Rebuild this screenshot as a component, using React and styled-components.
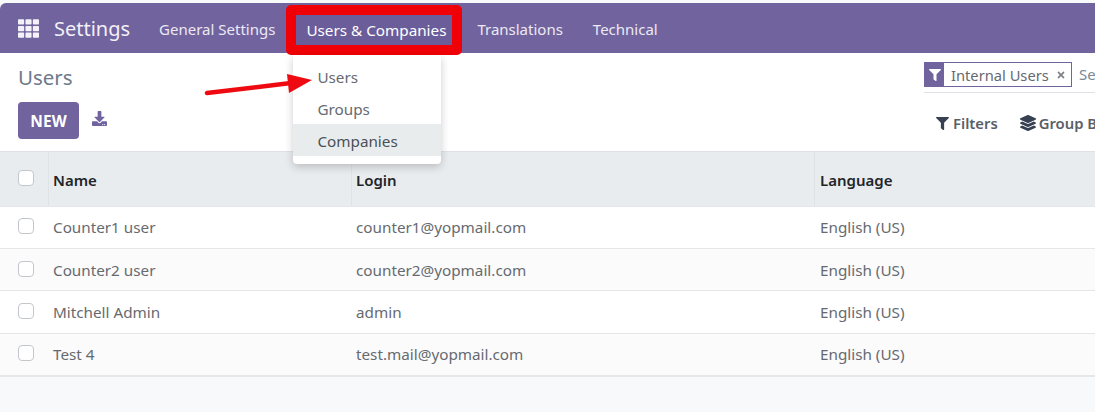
import React from 'react';
import styled, { createGlobalStyle } from 'styled-components';
import { FaFilter, FaLayerGroup, FaDownload, FaTimes, FaTh } from 'react-icons/fa';

const GlobalStyle = createGlobalStyle`
  html, body {
    margin: 0;
    padding: 0;
    background: #f8f9fa;
    font-family: "Noto Sans", "Open Sans", sans-serif;
    overflow: hidden;
  }
`;

const rows = [
  { name: 'Counter1 user', login: 'counter1@yopmail.com', height: 42 },
  { name: 'Counter2 user', login: 'counter2@yopmail.com', height: 42, alt: true, low: true },
  { name: 'Mitchell Admin', login: 'admin', height: 43 },
  { name: 'Test 4', login: 'test.mail@yopmail.com', height: 41, alt: true },
];

const App = () => {
  return (
    <Page>
      <GlobalStyle />
      <NavBar>
        <AppsIcon />
        <Brand>Settings</Brand>
        <NavItem>General Settings</NavItem>
        <HighlightBox>
          <ActiveItem>Users &amp; Companies</ActiveItem>
          <Dropdown>
            <DropItem>Users</DropItem>
            <DropItem>Groups</DropItem>
            <DropItem $hover>Companies</DropItem>
          </Dropdown>
        </HighlightBox>
        <NavItem>Translations</NavItem>
        <NavItem>Technical</NavItem>
      </NavBar>

      <ControlPanel>
        <LeftPanel>
          <Title>Users</Title>
          <Actions>
            <NewButton>NEW</NewButton>
            <DownloadIcon />
          </Actions>
        </LeftPanel>
        <RightPanel>
          <SearchBar>
            <Facet>
              <FacetIcon><FaFilter /></FacetIcon>
              <FacetText>Internal Users</FacetText>
              <FacetClose><FaTimes /></FacetClose>
            </Facet>
            <SearchHint>Search...</SearchHint>
          </SearchBar>
          <Tools>
            <Tool><FaFilter />Filters</Tool>
            <Tool $large><FaLayerGroup />Group By</Tool>
          </Tools>
        </RightPanel>
      </ControlPanel>

      <Table>
        <HeadRow>
          <CheckCell $head><Check /></CheckCell>
          <HeadName>Name</HeadName>
          <HeadLogin>Login</HeadLogin>
          <HeadLanguage>Language</HeadLanguage>
        </HeadRow>
        {rows.map((r) => (
          <Row key={r.name} $alt={r.alt} $low={r.low} $height={r.height}>
            <CheckCell><Check /></CheckCell>
            <NameCell>{r.name}</NameCell>
            <LoginCell>{r.login}</LoginCell>
            <LanguageCell>English (US)</LanguageCell>
          </Row>
        ))}
      </Table>

      <Arrow width="112" height="44" viewBox="0 0 112 44">
        <path d="M4 23 L88 13" stroke="#ee0a10" strokeWidth="4.5" strokeLinecap="round" />
        <path d="M84 4 L109 10 L86 23 Z" fill="#ee0a10" />
      </Arrow>
    </Page>
  );
};

export default App;

const Page = styled.div`
  position: relative;
  width: 1095px;
  height: 412px;
  overflow: hidden;
  background: #f8f9fa;
  padding-top: 3px;
  box-sizing: border-box;
`;

const NavBar = styled.div`
  display: flex;
  align-items: center;
  height: 50px;
  padding-top: 1px;
  background: #71639e;
  border-top-left-radius: 6px;
  color: #fff;
  box-sizing: border-box;
`;

const AppsIcon = styled(FaTh)`
  font-size: 21px;
  margin-left: 18px;
  margin-top: -1px;
  color: #f4f2f8;
`;

const Brand = styled.div`
  font-size: 20px;
  margin-left: 15px;
  margin-right: 29px;
  color: #f2f0f6;
`;

const NavItem = styled.div`
  font-size: 15px;
  color: #ece9f3;
  margin-right: 30px;
  white-space: nowrap;
`;

const HighlightBox = styled.div`
  position: relative;
  align-self: flex-start;
  margin-left: -19px;
  margin-right: 15px;
  margin-top: 1px;
  height: 50px;
  width: 176px;
  flex: none;
  box-sizing: border-box;
  border: 10px solid #f00006;
  border-radius: 5px;
  background: #6b5d99;
  display: flex;
  align-items: center;
`;

const ActiveItem = styled.div`
  font-size: 15.25px;
  color: #fff;
  margin-left: 10px;
  white-space: nowrap;
`;

const Dropdown = styled.div`
  position: absolute;
  top: 40px;
  left: -3px;
  width: 148px;
  background: #fff;
  padding: 5px 0 8px;
  border-radius: 0 0 4px 4px;
  box-shadow: 0 3px 9px rgba(0, 0, 0, 0.2);
  z-index: 3;
`;

const DropItem = styled.div`
  height: 32px;
  line-height: 35px;
  padding-left: 24px;
  font-size: 15.25px;
  color: ${(p) => (p.$hover ? '#495057' : '#666a70')};
  background: ${(p) => (p.$hover ? '#e9ecec' : 'transparent')};
`;

const ControlPanel = styled.div`
  display: flex;
  justify-content: space-between;
  height: 99px;
  background: #fff;
  border-bottom: 1px solid #dee2e6;
  box-sizing: border-box;
  padding-left: 18px;
`;

const LeftPanel = styled.div`
  display: flex;
  flex-direction: column;
`;

const Title = styled.div`
  font-size: 20.5px;
  line-height: 27px;
  margin-top: 11px;
  color: #6c7a89;
`;

const Actions = styled.div`
  display: flex;
  align-items: flex-start;
  margin-top: 11px;
`;

const NewButton = styled.div`
  width: 61px;
  height: 37px;
  line-height: 39px;
  text-align: center;
  background: #71639e;
  color: #fff;
  font-size: 15.5px;
  font-weight: 700;
  border-radius: 4px;
`;

const DownloadIcon = styled(FaDownload)`
  font-size: 15px;
  color: #71639e;
  margin-left: 13px;
  margin-top: 9px;
`;

const RightPanel = styled.div`
  width: 171px;
  flex: none;
  overflow: hidden;
`;

const SearchBar = styled.div`
  display: flex;
  align-items: flex-start;
  margin-top: 9px;
  height: 30px;
  border-bottom: 1px solid #dee2e6;
  white-space: nowrap;
`;

const Facet = styled.div`
  display: flex;
  align-items: center;
  height: 25px;
  width: 148px;
  flex: none;
  box-sizing: border-box;
  border: 1px solid #71639e;
`;

const FacetIcon = styled.div`
  width: 19px;
  height: 100%;
  background: #71639e;
  color: #fff;
  font-size: 12px;
  display: flex;
  align-items: center;
  justify-content: center;
`;

const FacetText = styled.div`
  font-size: 14.7px;
  color: #666a70;
  margin-left: 7px;
`;

const FacetClose = styled.div`
  font-size: 10px;
  color: #808488;
  margin-left: 7px;
  display: flex;
`;

const SearchHint = styled.div`
  font-size: 15px;
  line-height: 25px;
  color: #7b8794;
  margin-left: 7px;
`;

const Tools = styled.div`
  display: flex;
  gap: 22px;
  margin-top: 20px;
  margin-left: 12px;
  white-space: nowrap;
`;

const Tool = styled.div`
  display: flex;
  align-items: center;
  gap: ${(p) => (p.$large ? '3px' : '4px')};
  font-size: 14.8px;
  font-weight: 600;
  color: #5a6068;
  flex: none;

  svg {
    color: #374151;
    font-size: ${(p) => (p.$large ? '16px' : '13px')};
  }
`;

const Table = styled.div`
  border-bottom: 2px solid #e5e7ea;
`;

const HeadRow = styled.div`
  display: grid;
  grid-template-columns: 48px 303px 463px 1fr;
  height: 54px;
  background: #e9ecef;
  font-size: 15px;
  font-weight: 600;
  color: #212529;
  border-bottom: 1px solid #e4e6e9;
`;

const Row = styled.div`
  display: grid;
  grid-template-columns: 48px 303px 463px 1fr;
  box-sizing: border-box;
  height: ${(p) => p.$height}px;
  padding-top: ${(p) => (p.$low ? '2px' : '0')};
  background: ${(p) => (p.$alt ? '#fbfbfb' : '#fff')};
  border-bottom: 1px solid #e4e6e9;
  font-size: 15.25px;
  color: #666a70;

  &:last-child {
    border-bottom: none;
  }
`;

const CheckCell = styled.div`
  display: flex;
  align-items: center;
  padding-left: 18px;
  padding-bottom: ${(p) => (p.$head ? '2px' : '3px')};
`;

const Check = styled.div`
  width: 14px;
  height: 14px;
  background: #fff;
  border: 1px solid #c3c7cc;
  border-radius: 4px;
`;

const HeadName = styled.div`
  display: flex;
  align-items: center;
  padding-left: 4px;
  padding-top: 2px;
  border-left: 1px solid #e0e3e6;
`;

const HeadLogin = styled(HeadName)`
  padding-left: 4px;
`;

const HeadLanguage = styled(HeadName)`
  padding-left: 5px;
`;

const NameCell = styled.div`
  display: flex;
  align-items: center;
  padding-left: 5px;
  padding-bottom: 1px;
`;

const LoginCell = styled(NameCell)`
  padding-left: 5px;
`;

const LanguageCell = styled(NameCell)`
  padding-left: 6px;
`;

const Arrow = styled.svg`
  position: absolute;
  left: 203px;
  top: 70px;
  z-index: 5;
`;
